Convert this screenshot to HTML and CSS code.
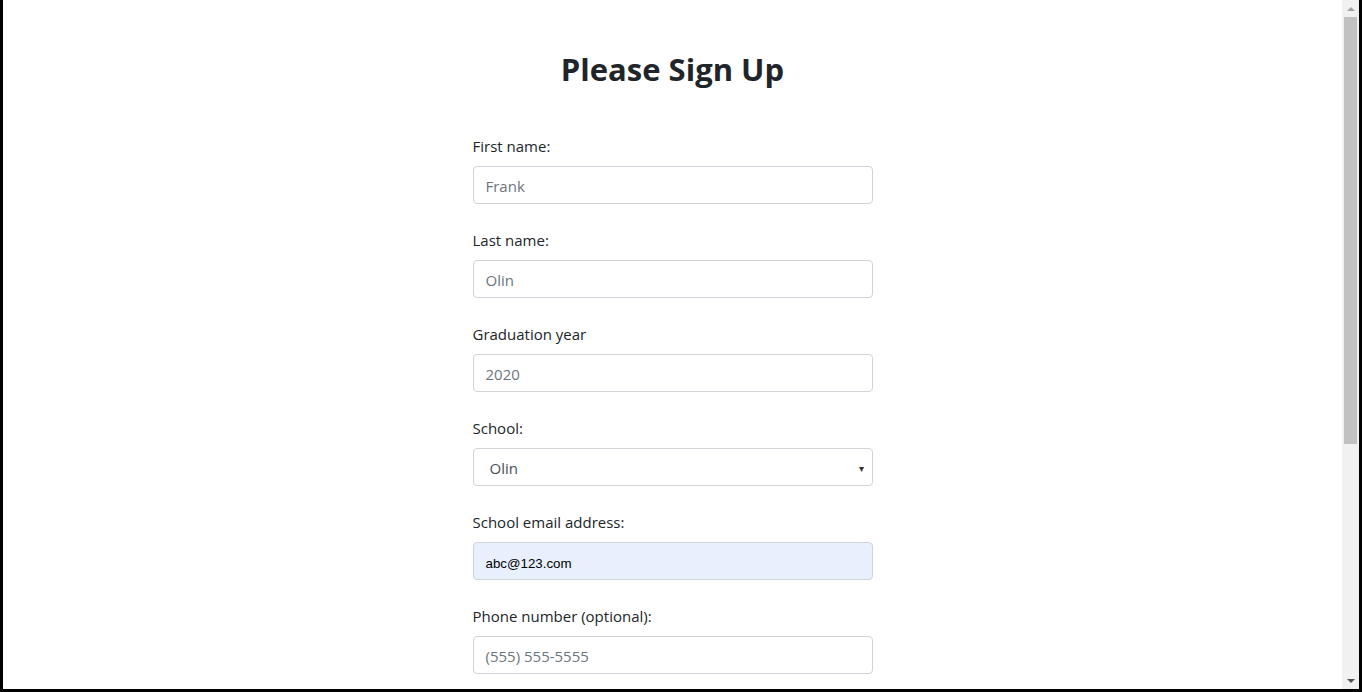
FILE: index.html
```html
<!DOCTYPE html>
<html lang="en">
<head>
<meta charset="utf-8">
<title>Please Sign Up</title>
<link rel="stylesheet" href="styles.css">
</head>
<body>
<div class="frame">
  <main class="page">
    <h1 class="title">Please Sign Up</h1>
    <form class="signup">
      <div class="group">
        <label class="label">First name:</label>
        <div class="control placeholder">Frank</div>
      </div>
      <div class="group">
        <label class="label">Last name:</label>
        <div class="control placeholder">Olin</div>
      </div>
      <div class="group">
        <label class="label">Graduation year</label>
        <div class="control placeholder">2020</div>
      </div>
      <div class="group">
        <label class="label">School:</label>
        <div class="control select"><span class="select-value">Olin</span><span class="caret">&#9662;</span></div>
      </div>
      <div class="group">
        <label class="label">School email address:</label>
        <div class="control autofill">abc@123.com</div>
      </div>
      <div class="group">
        <label class="label">Phone number (optional):</label>
        <div class="control placeholder">(555) 555-5555</div>
      </div>
    </form>
  </main>
  <div class="scrollbar">
    <div class="sb-btn"><span class="tri-up"></span></div>
    <div class="sb-track"><div class="sb-thumb"></div></div>
    <div class="sb-btn"><span class="tri-down"></span></div>
  </div>
</div>
</body>
</html>
```

FILE: styles.css
```css
html, body {
  margin: 0;
  padding: 0;
  height: 692px;
  overflow: hidden;
  background: #fff;
}

.frame {
  box-sizing: border-box;
  height: 692px;
  display: flex;
  border-left: 3px solid #000;
  border-right: 3px solid #000;
  border-bottom: 3px solid #000;
  background: #fff;
}

.page {
  flex: 1;
  overflow: hidden;
  display: flex;
  flex-direction: column;
  align-items: center;
  font-family: "Open Sans", "Noto Sans", sans-serif;
  color: #212529;
  font-size: 15px;
}

.title {
  margin: 46px 0 42px;
  font-size: 31px;
  font-weight: 700;
  line-height: 46px;
  color: #212529;
}

.signup {
  width: 400px;
  display: flex;
  flex-direction: column;
  gap: 24px;
}

.group {
  display: flex;
  flex-direction: column;
  gap: 8px;
}

.label {
  line-height: 24px;
  height: 24px;
}

.control {
  box-sizing: border-box;
  height: 38px;
  border: 1px solid #ced4da;
  border-radius: 4px;
  padding: 2px 12px 0;
  display: flex;
  align-items: center;
  font-size: 15px;
  color: #495057;
  background: #fff;
}

.placeholder {
  color: #6c757d;
}

.select {
  justify-content: space-between;
  padding: 2px 8px 0 16px;
  color: #495057;
}

.select-value {
  font-size: 15px;
}

.caret {
  font-size: 10px;
  color: #333;
}

.autofill {
  background: #e8f0fe;
  color: #000;
  font-family: "Liberation Sans", Arial, sans-serif;
  font-size: 13.33px;
  padding-top: 4px;
}

.scrollbar {
  width: 17px;
  flex: none;
  display: flex;
  flex-direction: column;
  background: #f1f1f1;
}

.sb-btn {
  height: 17px;
  display: flex;
  align-items: center;
  justify-content: center;
}

.tri-up {
  width: 0;
  height: 0;
  border-left: 4px solid transparent;
  border-right: 4px solid transparent;
  border-bottom: 4px solid #a3a3a3;
}

.tri-down {
  width: 0;
  height: 0;
  border-left: 4px solid transparent;
  border-right: 4px solid transparent;
  border-top: 4px solid #505050;
}

.sb-track {
  flex: 1;
  padding: 0 2px;
}

.sb-thumb {
  height: 427px;
  background: #c1c1c1;
}
```
